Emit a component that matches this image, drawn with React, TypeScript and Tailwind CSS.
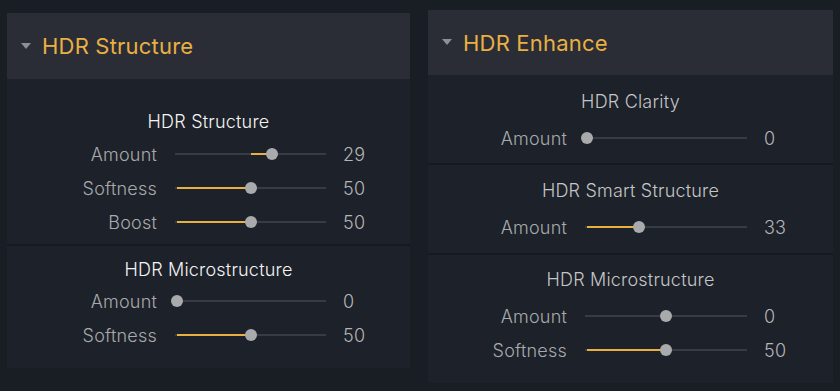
import React from "react";

type Row = { label: string; value: number; min: number; max: number };
type Section = { title: string; bright?: boolean; pt: string; pb: string; gap: string; rows: Row[] };

const Slider: React.FC<{ value: number; min: number; max: number; width: number }> = ({ value, min, max, width }) => {
  const frac = (value - min) / (max - min);
  const zero = (0 - min) / (max - min);
  const usable = width - 4;
  const thumb = 2 + frac * usable;
  const origin = 2 + zero * usable;
  const fillLeft = Math.min(thumb, origin);
  const fillWidth = Math.abs(thumb - origin);
  return (
    <div className="relative h-[34px]" style={{ width }}>
      <div className="absolute left-0 right-0 top-[16px] h-[2px] bg-[#373c44]" />
      {fillWidth > 0 && (
        <div
          className="absolute top-[16px] h-[2px] bg-[#e8b040]"
          style={{ left: fillLeft, width: fillWidth }}
        />
      )}
      <div
        className="absolute top-[11px] h-[12px] w-[12px] -ml-[6px] rounded-full bg-[#a9aaac]"
        style={{ left: thumb }}
      />
    </div>
  );
};

const Panel: React.FC<{
  title: string;
  headerH: string;
  labelW: number;
  trackW: number;
  className: string;
  sections: Section[];
}> = ({ title, headerH, labelW, trackW, className, sections }) => (
  <div className={`flex flex-col bg-[#1d2129] ${className}`}>
    <div className={`flex items-center bg-[#2a2d35] ${headerH}`}>
      <svg width="10" height="7" viewBox="0 0 10 7" className="ml-[14px] mr-[11px]">
        <path d="M0 0 L10 0 L5 6 Z" fill="#8c8f95" />
      </svg>
      <span className="text-[22px] text-[#e9b043] leading-none tracking-[0.2px]">{title}</span>
    </div>
    {sections.map((s, i) => (
      <div
        key={s.title}
        className={`flex flex-col ${s.pt} ${s.pb} ${i < sections.length - 1 ? "border-b-2 border-[#161a20]" : "flex-1"}`}
      >
        <div
          className={`h-[24px] leading-[24px] text-center text-[18px] font-light tracking-[0.2px] ${s.bright ? "text-[#f4f4f4]" : "text-[#c4c5c8]"}`}
        >
          {s.title}
        </div>
        <div className={`flex flex-col ${s.gap}`}>
          {s.rows.map((r) => (
            <div key={r.label} className="flex items-center h-[34px]">
              <div
                className="text-right text-[18px] font-light tracking-[0.2px] text-[#a7a9ac]"
                style={{ width: labelW }}
              >
                {r.label}
              </div>
              <div className="ml-[18px]">
                <Slider value={r.value} min={r.min} max={r.max} width={trackW} />
              </div>
              <div className="ml-[17px] text-[18px] font-light tracking-[0.2px] text-[#b4b5b7]">{r.value}</div>
            </div>
          ))}
        </div>
      </div>
    ))}
  </div>
);

export default function App() {
  return (
    <div
      className="w-[840px] h-[391px] bg-[#191d24] flex items-start overflow-hidden"
      style={{ fontFamily: "Inter, 'Noto Sans', sans-serif" }}
    >
      <Panel
        title="HDR Structure"
        headerH="h-[66px]"
        labelW={150}
        trackW={151}
        className="ml-[7px] mt-[13px] w-[403px] h-[355px]"
        sections={[
          {
            title: "HDR Structure",
            bright: true,
            pt: "pt-[31px]",
            pb: "pb-[5px]",
            gap: "mt-[3px]",
            rows: [
              { label: "Amount", value: 29, min: -100, max: 100 },
              { label: "Softness", value: 50, min: 0, max: 100 },
              { label: "Boost", value: 50, min: 0, max: 100 },
            ],
          },
          {
            title: "HDR Microstructure",
            bright: true,
            pt: "pt-[12px]",
            pb: "pb-[16px]",
            gap: "mt-[2px]",
            rows: [
              { label: "Amount", value: 0, min: 0, max: 100 },
              { label: "Softness", value: 50, min: 0, max: 100 },
            ],
          },
        ]}
      />
      <Panel
        title="HDR Enhance"
        headerH="h-[65px]"
        labelW={139}
        trackW={162}
        className="ml-[18px] mt-[10px] w-[405px] h-[373px]"
        sections={[
          {
            title: "HDR Clarity",
            pt: "pt-[15px]",
            pb: "pb-[8px]",
            gap: "mt-[7px]",
            rows: [{ label: "Amount", value: 0, min: 0, max: 100 }],
          },
          {
            title: "HDR Smart Structure",
            pt: "pt-[14px]",
            pb: "pb-[9px]",
            gap: "mt-[7px]",
            rows: [{ label: "Amount", value: 33, min: 0, max: 100 }],
          },
          {
            title: "HDR Microstructure",
            pt: "pt-[13px]",
            pb: "pb-[15px]",
            gap: "mt-[7px]",
            rows: [
              { label: "Amount", value: 0, min: -100, max: 100 },
              { label: "Softness", value: 50, min: 0, max: 100 },
            ],
          },
        ]}
      />
    </div>
  );
}
